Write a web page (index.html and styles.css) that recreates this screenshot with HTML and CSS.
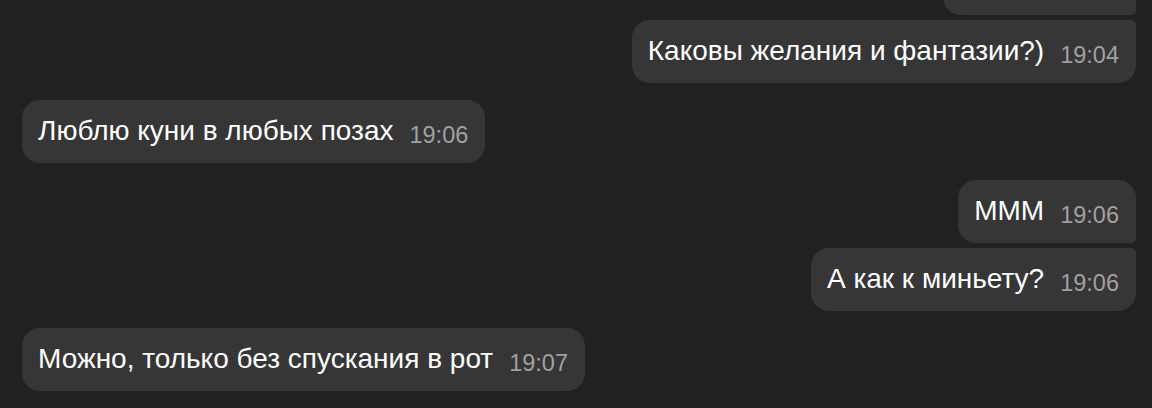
FILE: index.html
```html
<!DOCTYPE html>
<html lang="ru">
<head>
<meta charset="utf-8">
<link rel="stylesheet" href="styles.css">
</head>
<body>
<div class="chat">
  <div class="group out">
    <div class="bubble first stub"></div>
    <div class="bubble last"><span class="text">Каковы желания и фантазии?)</span><span class="time">19:04</span></div>
  </div>
  <div class="group in">
    <div class="bubble"><span class="text">Люблю куни в любых позах</span><span class="time">19:06</span></div>
  </div>
  <div class="group out">
    <div class="bubble first"><span class="text">МММ</span><span class="time">19:06</span></div>
    <div class="bubble last"><span class="text">А как к миньету?</span><span class="time">19:06</span></div>
  </div>
  <div class="group in">
    <div class="bubble"><span class="text">Можно, только без спускания в рот</span><span class="time">19:07</span></div>
  </div>
</div>
</body>
</html>
```
FILE: styles.css
```css
html, body {
  margin: 0;
  padding: 0;
  background: #212121;
  height: 100%;
  overflow: hidden;
}
.chat {
  display: flex;
  flex-direction: column;
  gap: 17px;
  padding: 0 16px 0 22px;
  margin-top: -48px;
  font-family: "Liberation Sans", Arial, sans-serif;
}
.group {
  display: flex;
  flex-direction: column;
  gap: 5px;
}
.group.out { align-items: flex-end; }
.group.in { align-items: flex-start; }
.bubble {
  box-sizing: border-box;
  height: 63px;
  display: flex;
  align-items: baseline;
  padding: 17px 17px 0 16px;
  background: #363636;
  border-radius: 18px;
}
.out .bubble.first { border-bottom-right-radius: 5px; }
.out .bubble.last { border-top-right-radius: 5px; }
.bubble.stub { width: 193px; }
.text {
  color: #ffffff;
  font-size: 28px;
  line-height: 28px;
  white-space: nowrap;
}
.time {
  color: #a0a0a0;
  font-size: 23.5px;
  margin-left: 16px;
  position: relative;
  top: 3px;
  white-space: nowrap;
}
```
